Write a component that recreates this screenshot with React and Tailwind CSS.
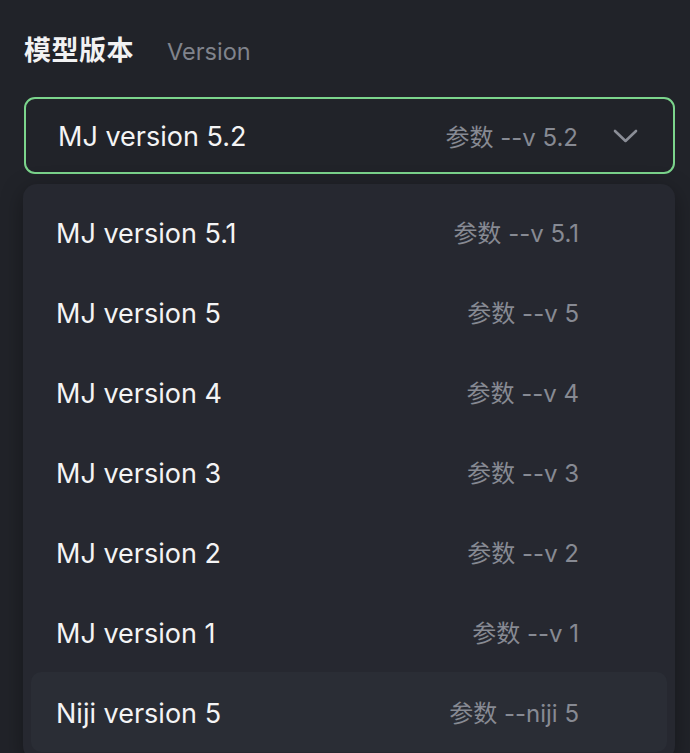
import React from 'react'

const options = [
  { name: 'MJ version 5.1', param: '--v 5.1' },
  { name: 'MJ version 5', param: '--v 5' },
  { name: 'MJ version 4', param: '--v 4' },
  { name: 'MJ version 3', param: '--v 3' },
  { name: 'MJ version 2', param: '--v 2' },
  { name: 'MJ version 1', param: '--v 1' },
  { name: 'Niji version 5', param: '--niji 5', active: true },
]

const App = () => {
  return (
    <div
      className="w-[690px] h-[753px] overflow-hidden bg-[#212329] pl-6 pr-[15px] pt-[33px]"
      style={{ fontFamily: 'Inter, "Noto Sans CJK SC", sans-serif' }}
    >
      {/* Header */}
      <div className="flex items-baseline h-9 leading-9">
        <h2 className="text-[27px] font-bold text-[#f2f2f3] tracking-[0.5px]">模型版本</h2>
        <span className="ml-[33px] text-[23.5px] text-[#80838c]">Version</span>
      </div>

      {/* Select trigger */}
      <div className="mt-[28px] h-[77px] rounded-[11px] border-2 border-[#7bd48c] flex items-center pl-[32px] pr-[35px] pt-1">
        <span className="text-[27px] text-[#f4f4f5] flex-1">MJ version 5.2</span>
        <span className="text-[24px] text-[#878a93]">参数 --v 5.2</span>
        <svg className="ml-[35px] -mt-1" width="25" height="14" viewBox="0 0 25 14" fill="none">
          <polyline points="2,2 12.5,12 23,2" stroke="#8b8e97" strokeWidth="2.6" strokeLinecap="round" strokeLinejoin="round" />
        </svg>
      </div>

      {/* Dropdown */}
      <div className="mt-[10px] -ml-px rounded-[14px] bg-[#262830] p-2 shadow-[0_6px_22px_rgba(0,0,0,0.35)]">
        {options.map(opt => (
          <div
            key={opt.name}
            className={`h-[80px] flex items-center pl-[25px] pr-[88px] pt-1 rounded-[10px] ${opt.active ? 'bg-[#2a2d35]' : ''}`}
          >
            <span className="flex-1 text-[27px] text-[#f4f4f5]">{opt.name}</span>
            <span className="text-[24px] text-[#878a93]">参数 {opt.param}</span>
          </div>
        ))}
      </div>
    </div>
  )
}

export default App
